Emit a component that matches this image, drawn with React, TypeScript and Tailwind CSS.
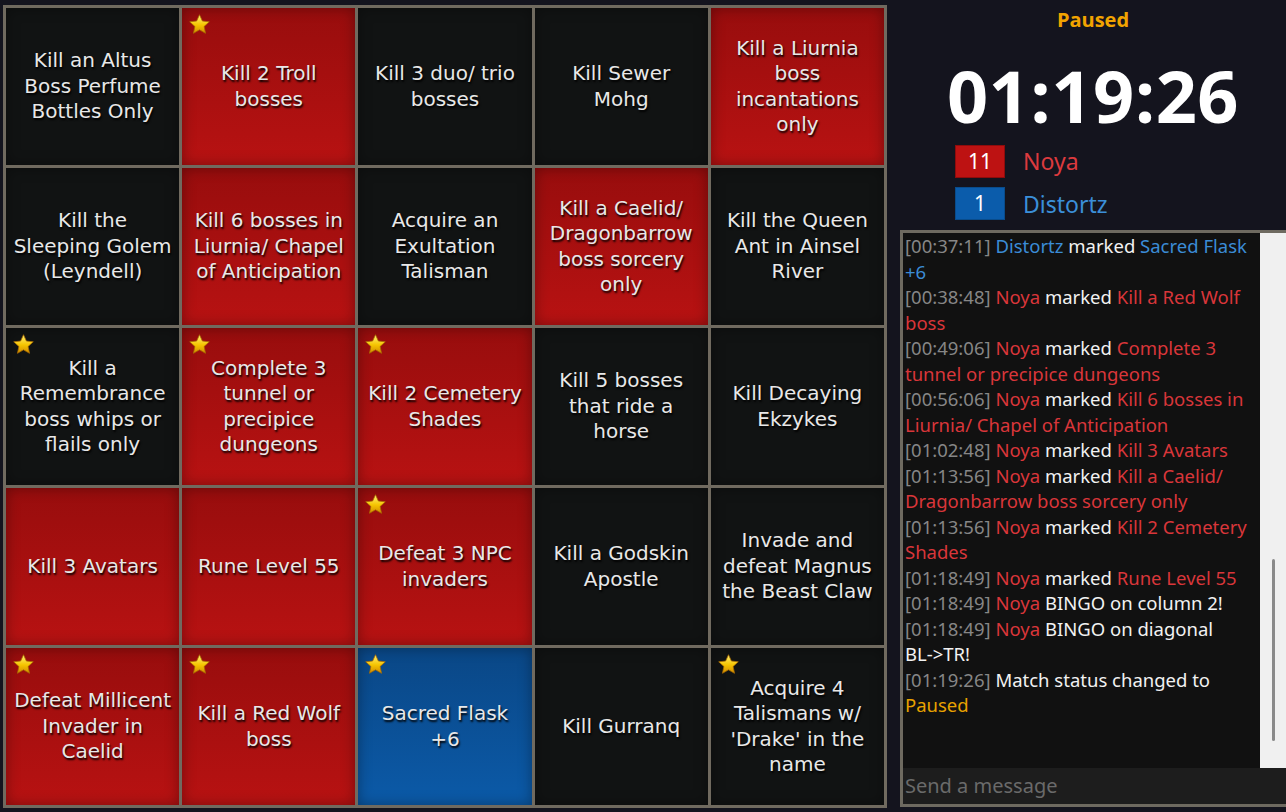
import React from 'react';

type Color = 'black' | 'red' | 'blue';

// line breaks follow the board's own wrapping
const cells: { text: string; color: Color; star?: boolean }[] = [
  { text: 'Kill an Altus\nBoss Perfume\nBottles Only', color: 'black' },
  { text: 'Kill 2 Troll\nbosses', color: 'red', star: true },
  { text: 'Kill 3 duo/ trio\nbosses', color: 'black' },
  { text: 'Kill Sewer\nMohg', color: 'black' },
  { text: 'Kill a Liurnia\nboss\nincantations\nonly', color: 'red' },
  { text: 'Kill the\nSleeping Golem\n(Leyndell)', color: 'black' },
  { text: 'Kill 6 bosses in\nLiurnia/ Chapel\nof Anticipation', color: 'red' },
  { text: 'Acquire an\nExultation\nTalisman', color: 'black' },
  { text: 'Kill a Caelid/\nDragonbarrow\nboss sorcery\nonly', color: 'red' },
  { text: 'Kill the Queen\nAnt in Ainsel\nRiver', color: 'black' },
  { text: 'Kill a\nRemembrance\nboss whips or\nflails only', color: 'black', star: true },
  { text: 'Complete 3\ntunnel or\nprecipice\ndungeons', color: 'red', star: true },
  { text: 'Kill 2 Cemetery\nShades', color: 'red', star: true },
  { text: 'Kill 5 bosses\nthat ride a\nhorse', color: 'black' },
  { text: 'Kill Decaying\nEkzykes', color: 'black' },
  { text: 'Kill 3 Avatars', color: 'red' },
  { text: 'Rune Level 55', color: 'red' },
  { text: 'Defeat 3 NPC\ninvaders', color: 'red', star: true },
  { text: 'Kill a Godskin\nApostle', color: 'black' },
  { text: 'Invade and\ndefeat Magnus\nthe Beast Claw', color: 'black' },
  { text: 'Defeat Millicent\nInvader in\nCaelid', color: 'red', star: true },
  { text: 'Kill a Red Wolf\nboss', color: 'red', star: true },
  { text: 'Sacred Flask\n+6', color: 'blue', star: true },
  { text: 'Kill Gurranq', color: 'black' },
  { text: "Acquire 4\nTalismans w/\n'Drake' in the\nname", color: 'black', star: true },
];

const bgFor: Record<Color, string> = {
  black: 'bg-[#111313]',
  red: 'bg-linear-to-b from-[#980d0d] to-[#b81212]',
  blue: 'bg-linear-to-b from-[#0a4786] to-[#0b5aa8]',
};

type Part = { t: string; c: 'time' | 'red' | 'blue' | 'white' | 'orange'; nowrap?: boolean };

const log: Part[][] = [
  [{ t: '[00:37:11] ', c: 'time' }, { t: 'Distortz', c: 'blue' }, { t: ' marked ', c: 'white' }, { t: 'Sacred Flask +6', c: 'blue' }],
  [{ t: '[00:38:48] ', c: 'time' }, { t: 'Noya', c: 'red' }, { t: ' marked ', c: 'white' }, { t: 'Kill a Red Wolf boss', c: 'red' }],
  [{ t: '[00:49:06] ', c: 'time' }, { t: 'Noya', c: 'red' }, { t: ' marked ', c: 'white' }, { t: 'Complete 3 tunnel or precipice dungeons', c: 'red' }],
  [{ t: '[00:56:06] ', c: 'time' }, { t: 'Noya', c: 'red' }, { t: ' marked ', c: 'white' }, { t: 'Kill 6 bosses in Liurnia/ Chapel of Anticipation', c: 'red' }],
  [{ t: '[01:02:48] ', c: 'time' }, { t: 'Noya', c: 'red' }, { t: ' marked ', c: 'white' }, { t: 'Kill 3 Avatars', c: 'red' }],
  [{ t: '[01:13:56] ', c: 'time' }, { t: 'Noya', c: 'red' }, { t: ' marked ', c: 'white' }, { t: 'Kill a Caelid/ Dragonbarrow boss sorcery only', c: 'red' }],
  [{ t: '[01:13:56] ', c: 'time' }, { t: 'Noya', c: 'red' }, { t: ' marked ', c: 'white' }, { t: 'Kill 2 Cemetery Shades', c: 'red' }],
  [{ t: '[01:18:49] ', c: 'time' }, { t: 'Noya', c: 'red' }, { t: ' marked ', c: 'white' }, { t: 'Rune Level 55', c: 'red' }],
  [{ t: '[01:18:49] ', c: 'time' }, { t: 'Noya', c: 'red' }, { t: ' BINGO on column 2!', c: 'white' }],
  [{ t: '[01:18:49] ', c: 'time' }, { t: 'Noya', c: 'red' }, { t: ' BINGO on diagonal ', c: 'white' }, { t: 'BL->TR!', c: 'white', nowrap: true }],
  [{ t: '[01:19:26] ', c: 'time' }, { t: 'Match status changed to ', c: 'white' }, { t: 'Paused', c: 'orange' }],
];

const partColor = {
  time: 'text-[#868686]',
  red: 'text-[#d9363a]',
  blue: 'text-[#3b8cd6]',
  white: 'text-[#f2f2f2]',
  orange: 'text-[#e8a200]',
};

function Star() {
  return (
    <svg width="23" height="23" viewBox="0 0 24 24" className="absolute left-[6px] top-[5px]">
      <defs>
        <linearGradient id="sg" x1="0" y1="0" x2="0" y2="1">
          <stop offset="0" stopColor="#fff27a" />
          <stop offset="0.55" stopColor="#f5c400" />
          <stop offset="1" stopColor="#d08a00" />
        </linearGradient>
      </defs>
      <path
        d="M12 1.8l3 6.6 7.2.8-5.4 4.9 1.5 7.1L12 17.6l-6.3 3.6 1.5-7.1L1.8 9.2 9 8.4z"
        fill="url(#sg)"
        stroke="#a86a00"
        strokeWidth="0.8"
        strokeLinejoin="round"
      />
    </svg>
  );
}

export default function App() {
  return (
    <div className="w-[1286px] h-[812px] bg-[#14141e] flex overflow-hidden">
      {/* Board */}
      <div className="pl-[3px] pt-[5px]">
        <div className="w-[884px] h-[803px] bg-[#706a5f] p-[3px] grid grid-cols-5 grid-rows-5 gap-[3px]">
          {cells.map((cell, i) => (
            <div
              key={i}
              className={`relative flex items-center justify-center px-1 text-center shadow-[inset_0_0_14px_rgba(0,0,0,0.35)] ${bgFor[cell.color]}`}
            >
              {cell.star && <Star />}
              <span
                className="whitespace-pre-line text-[20px] leading-[25.5px] text-[#e8e8e8] [text-shadow:1px_2px_2px_#000]"
                style={{ fontFamily: '"DejaVu Sans", sans-serif' }}
              >
                {cell.text}
              </span>
            </div>
          ))}
        </div>
      </div>

      {/* Right panel */}
      <div className="flex-1 ml-[13px] flex flex-col pb-[5px]" style={{ fontFamily: '"Noto Sans", sans-serif' }}>
        <div className="h-[230px] flex flex-col items-center" style={{ fontFamily: '"Open Sans", sans-serif' }}>
          <div className="mt-[6px] text-[20px] leading-[28px] font-bold text-[#f2a400]">Paused</div>
          <div className="mt-[22px] text-[72px] leading-[78px] font-bold text-white tracking-[0.5px]">01:19:26</div>
          <div className="self-start ml-[55px] mt-[10px] flex flex-col gap-[8px]" style={{ fontFamily: '"Noto Sans", sans-serif' }}>
            <div className="flex items-center gap-[18px]">
              <div className="w-[50px] h-[33px] bg-[#bd1212] border border-[#8e0c0c] flex items-center justify-center text-[21px] text-white">
                11
              </div>
              <span className="text-[23px] text-[#dc3a3e]">Noya</span>
            </div>
            <div className="flex items-center gap-[18px]">
              <div className="w-[50px] h-[33px] bg-[#0b5cab] border border-[#094c8c] flex items-center justify-center text-[21px] text-white">
                1
              </div>
              <span className="text-[23px] text-[#3b8fd8]">Distortz</span>
            </div>
          </div>
        </div>

        <div className="flex-1 flex flex-col border-t-[3px] border-l-[3px] border-b-[3px] border-[#6e6a60] bg-[#111111] min-h-0">
          <div className="flex-1 flex min-h-0">
            <div className="flex-1 pl-[2px] pr-[4px] text-[18.5px] leading-[25.5px]">
              {log.map((line, i) => (
                <div key={i}>
                  {line.map((p, j) => (
                    <span key={j} className={`${partColor[p.c]} ${p.nowrap ? 'whitespace-nowrap' : ''}`}>
                      {p.t}
                    </span>
                  ))}
                </div>
              ))}
            </div>
            <div className="w-[26px] bg-[#f0f0f0] relative">
              <div className="absolute left-[12px] top-[326px] w-[3px] h-[182px] bg-[#8a8a8a] rounded-full" />
            </div>
          </div>
          <div className="h-[36px] bg-[#1d1d1d] flex items-center pl-[2px] text-[20px] text-[#6a6a6a]">
            Send a message
          </div>
        </div>
      </div>
    </div>
  );
}
